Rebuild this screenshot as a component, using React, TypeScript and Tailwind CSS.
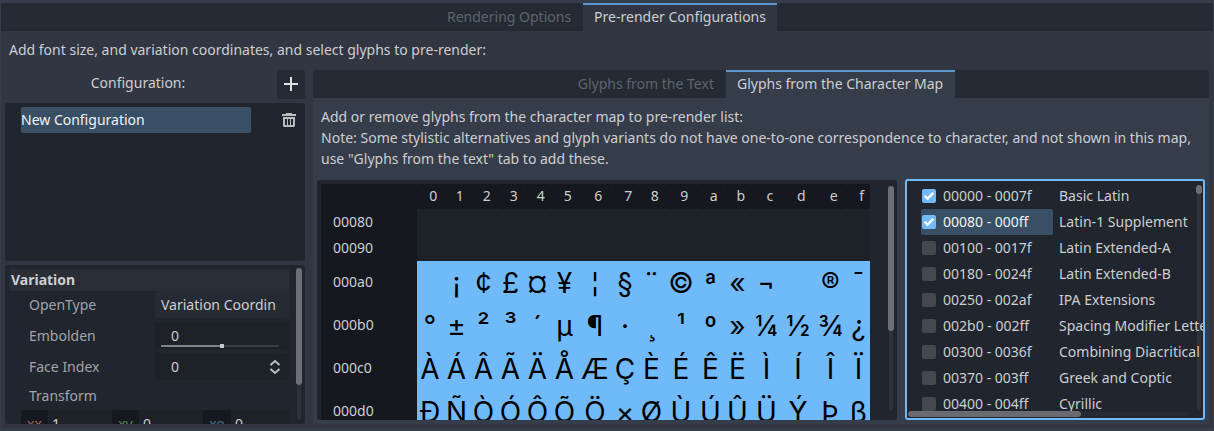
import type { ReactNode } from "react";

const columns = [
  { label: "0", width: 26 },
  { label: "1", width: 27 },
  { label: "2", width: 27 },
  { label: "3", width: 27 },
  { label: "4", width: 27 },
  { label: "5", width: 27 },
  { label: "6", width: 34 },
  { label: "7", width: 26 },
  { label: "8", width: 27 },
  { label: "9", width: 32 },
  { label: "a", width: 27 },
  { label: "b", width: 27 },
  { label: "c", width: 31 },
  { label: "d", width: 32 },
  { label: "e", width: 33 },
  { label: "f", width: 23 },
];

const glyphRows = [
  { code: "000a0", glyphs: [" ", "¡", "¢", "£", "¤", "¥", "¦", "§", "¨", "©", "ª", "«", "¬", " ", "®", "¯"] },
  { code: "000b0", glyphs: ["°", "±", "²", "³", "´", "µ", "¶", "·", "¸", "¹", "º", "»", "¼", "½", "¾", "¿"] },
  { code: "000c0", glyphs: ["À", "Á", "Â", "Ã", "Ä", "Å", "Æ", "Ç", "È", "É", "Ê", "Ë", "Ì", "Í", "Î", "Ï"] },
  { code: "000d0", glyphs: ["Ð", "Ñ", "Ò", "Ó", "Ô", "Õ", "Ö", "×", "Ø", "Ù", "Ú", "Û", "Ü", "Ý", "Þ", "ß"] },
];

const ranges = [
  { range: "00000 - 0007f", name: "Basic Latin", checked: true },
  { range: "00080 - 000ff", name: "Latin-1 Supplement", checked: true, selected: true },
  { range: "00100 - 0017f", name: "Latin Extended-A" },
  { range: "00180 - 0024f", name: "Latin Extended-B" },
  { range: "00250 - 002af", name: "IPA Extensions" },
  { range: "002b0 - 002ff", name: "Spacing Modifier Letters" },
  { range: "00300 - 0036f", name: "Combining Diacritical Marks" },
  { range: "00370 - 003ff", name: "Greek and Coptic" },
  { range: "00400 - 004ff", name: "Cyrillic" },
];

function TrashIcon() {
  return (
    <svg width="14" height="14" viewBox="0 0 14 14" fill="#b9bbbd">
      <path d="M4 0h6v1h4v2H0V1h4zM1 4h12v9l-1 1H2l-1-1zM3 6v6h2V6zM6 6v6h2V6zM9 6v6h2V6z" fillRule="evenodd" />
    </svg>
  );
}

function PlusIcon() {
  return (
    <svg width="14" height="14" viewBox="0 0 14 14" fill="#e0e0e0">
      <path d="M6 0h2v6h6v2H8v6H6V8H0V6h6z" />
    </svg>
  );
}

function CheckIcon() {
  return (
    <svg width="14" height="14" viewBox="0 0 14 14" fill="none" stroke="#fff" strokeWidth="2.3">
      <path d="M2.6 6.9 5.6 9.6 11.3 3.9" />
    </svg>
  );
}

function PropertyRow({ label, children }: { label: string; children?: ReactNode }) {
  return (
    <div className="flex h-[27px] shrink-0 items-center">
      <div className="w-[146px] pl-5 text-[#a2a4a8]">{label}</div>
      {children}
    </div>
  );
}

function Axis({ name, value, className }: { name: string; value: string; className: string }) {
  return (
    <div className="flex h-[27px] shrink-0 bg-[#1d2128]">
      <div className={`flex items-center justify-center rounded-l-sm bg-[#15181e] ${className}`}>{name}</div>
      <div className="flex w-16 items-center pl-1">{value}</div>
    </div>
  );
}

function ConfigurationColumn() {
  return (
    <div className="flex w-[300px] shrink-0 flex-col">
      <div className="flex h-[29px] items-center">
        <div className="flex-1 pb-[5px] pr-[6px] text-center">Configuration:</div>
        <div className="flex h-[29px] w-7 items-center justify-center rounded-[2px] bg-[#252b34] pb-px">
          <PlusIcon />
        </div>
      </div>
      <div className="mt-1 h-[158px] rounded-[3px] bg-[#21252e] pt-1">
        <div className="flex h-[26px] items-center pl-4">
          <div className="flex h-[26px] w-[230px] items-center rounded-[2px] bg-[#384f66] pb-[2px] text-[#f2f2f2]">
            New Configuration
          </div>
          <div className="ml-[31px]">
            <TrashIcon />
          </div>
        </div>
      </div>
      <div className="mt-1 flex h-[159px] overflow-hidden rounded-[3px] bg-[#21252e] pl-1 pt-1">
        <div className="flex w-[280px] flex-col">
          <div className="flex h-[22px] shrink-0 items-center bg-[#292d36] pb-[2px] pl-[2px] font-bold">Variation</div>
          <PropertyRow label="OpenType">
            <div className="flex h-[27px] w-[134px] items-center overflow-hidden rounded-[2px] bg-[#252a34] pl-[6px] whitespace-nowrap">
              Variation Coordin
            </div>
          </PropertyRow>
          <div className="h-1 shrink-0" />
          <PropertyRow label="Embolden">
            <div className="flex h-[27px] w-[134px] flex-col rounded-[2px] bg-[#1d2128] pl-[6px]">
              <div className="h-[22px] pl-[10px] pt-px leading-[26px]">0</div>
              <div className="flex h-1 w-[118px] items-center">
                <div className="h-[2px] w-[59px] bg-[#7f8288]" />
                <div className="size-1 bg-[#c8c9cc]" />
                <div className="h-[2px] flex-1 bg-[#3b3e46]" />
              </div>
            </div>
          </PropertyRow>
          <div className="h-1 shrink-0" />
          <PropertyRow label="Face Index">
            <div className="flex h-[27px] w-[134px] items-center justify-between rounded-[2px] bg-[#1d2128] pl-4 pr-2">
              <span>0</span>
              <svg width="12" height="16" viewBox="0 0 12 16" fill="none" stroke="#bdbec1" strokeWidth="2">
                <path d="M1.5 6 6 2l4.5 4M1.5 10 6 14l4.5-4" />
              </svg>
            </div>
          </PropertyRow>
          <div className="h-[2px] shrink-0" />
          <PropertyRow label="Transform" />
          <div className="ml-3 mt-px flex w-[268px] overflow-hidden">
            <Axis name="xx" value="1" className="w-[27px] text-[#9a6a5c]" />
            <Axis name="xy" value="0" className="w-[27px] text-[#4e8a5e]" />
            <Axis name="xo" value="0" className="w-7 text-[#487390]" />
          </div>
        </div>
        <div className="ml-[7px] mt-[-1px] h-[152px] w-[6px] px-px">
          <div className="h-full rounded-full bg-[#2d3139]">
            <div className="-mx-px h-[117px] w-[6px] rounded-full bg-[#6d6f74]" />
          </div>
        </div>
      </div>
    </div>
  );
}

function CharacterMap() {
  return (
    <div className="flex h-[240px] w-[580px] overflow-hidden rounded-[3px] bg-[#21252e] pl-1 pt-1">
      <div className="w-[549px] shrink-0">
        <div className="flex h-[25px]">
          <div className="w-24 rounded-t-[2px] bg-[#15181e]" />
          {columns.map((c) => (
            <div
              key={c.label}
              className="flex items-center justify-center rounded-[2px] bg-[#15181e] pb-[2px] pl-[6.5px]"
              style={{ width: c.width }}
            >
              {c.label}
            </div>
          ))}
        </div>
        {["00080", "00090"].map((code) => (
          <div key={code} className="flex h-[26px]">
            <div className="flex w-24 items-center bg-[#15181e] pb-[2px] pl-3">{code}</div>
            <div className="flex-1 bg-[#1d2128]" />
          </div>
        ))}
        {glyphRows.map((row) => (
          <div key={row.code} className="flex h-[43px] bg-[#70bafa]">
            <div className="flex w-24 items-center bg-[#15181e] pb-[2px] pl-3">{row.code}</div>
            {row.glyphs.map((g, i) => (
              <div
                key={i}
                className="flex items-center justify-center pt-[2px] font-['Inter'] text-[28px] leading-[41px] text-black"
                style={{ width: columns[i].width }}
              >
                {g}
              </div>
            ))}
          </div>
        ))}
      </div>
      <div className="ml-[18px] mt-[2px] h-[225px] w-[6px] px-px">
        <div className="h-full rounded-full bg-[#2d3139]">
          <div className="-mx-px h-[145px] w-[6px] rounded-full bg-[#6d6f74]" />
        </div>
      </div>
    </div>
  );
}

function RangeList() {
  return (
    <div className="relative h-[241px] w-[300px] overflow-hidden rounded-[3px] border-2 border-[#70bafa] bg-[#21252e] pl-[14px] pt-[2px]">
      <div className="absolute right-[2px] top-[4px] h-[225px] w-1 rounded-full bg-[#2d3139]" />
      {ranges.map((r) => (
        <div key={r.range} className="relative flex h-[26px] items-center whitespace-nowrap">
          <div
            className={`flex h-[26px] w-[132px] shrink-0 items-center rounded-[2px] pl-px ${
              r.selected ? "bg-[#384f66] text-[#f2f2f2]" : ""
            }`}
          >
            <div className={`size-[14px] rounded-[2px] ${r.checked ? "bg-[#70bafa]" : "bg-[#44484f]"}`}>
              {r.checked && <CheckIcon />}
            </div>
            <span className="ml-[7px] pb-[2px]">{r.range}</span>
          </div>
          <span className="ml-[6px] pb-[2px] tracking-[0.02px]">{r.name}</span>
        </div>
      ))}
      <div className="absolute right-[1px] top-[4px] h-[9px] w-[6px] rounded-full bg-[#6d6f74]" />
      <div className="absolute bottom-[2px] left-[1px] h-1 w-[281px] rounded-full bg-[#2d3139]/60" />
      <div className="absolute bottom-[1px] left-[1px] h-[6px] w-[173px] rounded-full bg-[#6d6f74]/95" />
    </div>
  );
}

export default function App() {
  return (
    <div className="h-[431px] w-[1214px] overflow-hidden bg-[#363d4a] pl-px pr-px pt-[3px] font-['Noto_Sans',sans-serif] text-[14px] leading-[21px] text-[#cdced1]">
      <div className="h-[425px] bg-[#313642]">
        <div className="flex h-7 justify-center rounded-t-[2px] bg-[#252b34] pr-[2px]">
          <div className="flex items-center px-3 pb-[2px] text-[#5f636b]">Rendering Options</div>
          <div className="flex items-center border-t-2 border-[#5b98cc] bg-[#313642] px-[11px] pb-[3px]">
            Pre-render Configurations
          </div>
        </div>
        <div className="px-1">
          <div className="flex h-[39px] items-center pb-[2px] pl-1">
            Add font size, and variation coordinates, and select glyphs to pre-render:
          </div>
          <div className="flex gap-2">
            <ConfigurationColumn />
            <div className="h-[354px] flex-1 bg-[#363d4a]">
              <div className="flex h-7 justify-center rounded-t-[2px] bg-[#252b34] pr-px">
                <div className="flex items-center px-3 pb-[2px] text-[#5f636b]">Glyphs from the Text</div>
                <div className="flex items-center border-t-2 border-[#5b98cc] bg-[#363d4a] pb-[3px] pl-[11px] pr-3">
                  Glyphs from the Character Map
                </div>
              </div>
              <div className="h-[81px] pl-2 pt-2 whitespace-nowrap">
                <p>Add or remove glyphs from the character map to pre-render list:</p>
                <p className="tracking-[0.008px]">
                  Note: Some stylistic alternatives and glyph variants do not have one-to-one correspondence to
                  character, and not shown in this map,
                </p>
                <p>use "Glyphs from the text" tab to add these.</p>
              </div>
              <div className="flex gap-2 pl-1">
                <div className="pt-px">
                  <CharacterMap />
                </div>
                <RangeList />
              </div>
            </div>
          </div>
        </div>
      </div>
    </div>
  );
}
